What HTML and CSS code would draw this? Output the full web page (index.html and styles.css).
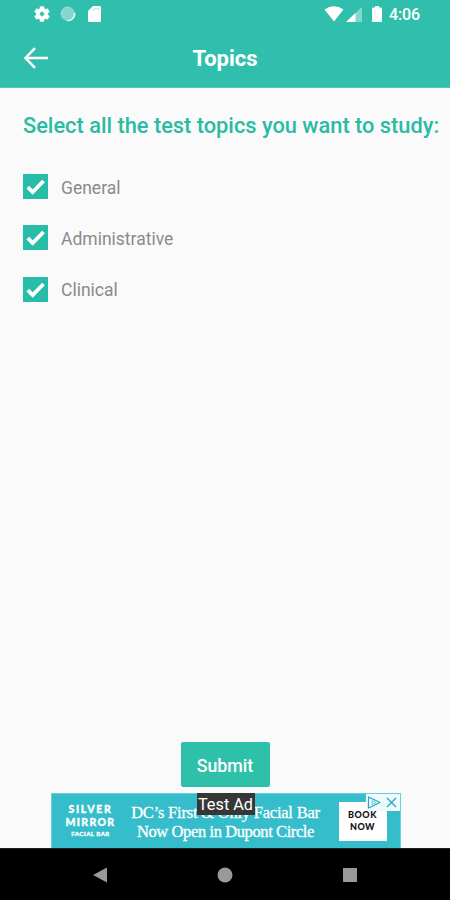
FILE: index.html
```html
<!DOCTYPE html>
<html lang="en">
<head>
<meta charset="utf-8">
<title>Topics</title>
<link rel="stylesheet" href="styles.css">
</head>
<body>
<div class="screen">
  <header class="header">
    <div class="status">
      <svg class="gear" width="18" height="18" viewBox="0 0 24 24"><path fill="#fff" stroke="#fff" stroke-width=".7" fill-rule="evenodd" d="M19.43 12.98c.04-.32.07-.64.07-.98s-.03-.66-.07-.98l2.11-1.65c.19-.15.24-.42.12-.64l-2-3.46c-.12-.22-.39-.3-.61-.22l-2.49 1c-.52-.4-1.08-.73-1.69-.98l-.38-2.65A.49.49 0 0 0 14 2h-4c-.25 0-.46.18-.49.42l-.38 2.65c-.61.25-1.17.59-1.69.98l-2.49-1c-.23-.09-.49 0-.61.22l-2 3.46c-.13.22-.07.49.12.64l2.11 1.65c-.04.32-.07.65-.07.98s.03.66.07.98l-2.11 1.65c-.19.15-.24.42-.12.64l2 3.46c.12.22.39.3.61.22l2.49-1c.52.4 1.08.73 1.69.98l.38 2.65c.03.24.24.42.49.42h4c.25 0 .46-.18.49-.42l.38-2.65c.61-.25 1.17-.59 1.69-.98l2.49 1c.23.09.49 0 .61-.22l2-3.46c.12-.22.07-.49-.12-.64zM12 15.2a3.2 3.2 0 1 1 0-6.4 3.2 3.2 0 0 1 0 6.4z"/></svg>
      <svg class="sync" width="16" height="16" viewBox="0 0 16 16"><circle cx="8" cy="8" r="7.2" fill="#83d8cb"/><path d="M14.700 7A7 7 0 0 1 7.500 14.700" fill="none" stroke="#e4f8f4" stroke-width="1.600"/><path d="M1.200 9A7 7 0 0 1 8 1" fill="none" stroke="#a4e2d9"/></svg>
      <svg class="card" width="13" height="16" viewBox="0 0 13 16"><path fill="#fff" d="M5 0h6.500Q13 0 13 1.500V14.500Q13 16 11.500 16h-10Q0 16 0 14.500V5z"/><path d="M5.400 2.500v2M7.900 2v2M10.300 2v2" stroke="#a5e0d7" stroke-width="1.200"/></svg>
      <span class="spacer"></span>
      <svg width="20" height="16" viewBox="0 0 20 16"><path fill="#fff" d="M.5 3.500Q10-3 19.500 3.500L10 15.500z"/></svg>
      <svg class="signal" width="16" height="15" viewBox="0 0 16 15"><path fill="#83d8cb" d="M16 0v15H0z"/><path fill="#fff" d="M9.500 6.100V15H0z"/></svg>
      <svg class="battery" width="10" height="16" viewBox="0 0 10 16"><path fill="#fff" d="M3 0h4v1.600h2Q10 1.600 10 2.600V15q0 1-1 1H1q-1 0-1-1V2.600q0-1 1-1h2z"/></svg>
      <span class="time">4:06</span>
    </div>
    <div class="bar">
      <svg class="back" width="24" height="22" viewBox="0 0 24 22"><path d="M24 11H2M11 1.200L1.500 11l9.500 9.800" fill="none" stroke="#fff" stroke-width="2.500"/></svg>
      <h1>Topics</h1>
    </div>
  </header>
  <main class="content">
    <h2>Select all the test topics you want to study:</h2>
    <ul class="topics">
      <li><span class="box"><svg width="25" height="25" viewBox="0 0 25 25"><path d="M4.800 13.200l4.900 4.900L20.500 7" fill="none" stroke="#fff" stroke-width="3.800"/></svg></span><span class="label">General</span></li>
      <li><span class="box"><svg width="25" height="25" viewBox="0 0 25 25"><path d="M4.800 13.200l4.900 4.900L20.500 7" fill="none" stroke="#fff" stroke-width="3.800"/></svg></span><span class="label">Administrative</span></li>
      <li><span class="box"><svg width="25" height="25" viewBox="0 0 25 25"><path d="M4.800 13.200l4.900 4.900L20.500 7" fill="none" stroke="#fff" stroke-width="3.800"/></svg></span><span class="label">Clinical</span></li>
    </ul>
  </main>
  <button class="submit">Submit</button>
  <div class="ad">
    <div class="brand"><span>SILVER</span><span class="mirror">MIRROR</span><small>FACIAL BAR</small></div>
    <div class="copy"><span class="line-one">DC’s First &amp; Only Facial Bar</span><span class="line-two">Now Open in Dupont Circle</span></div>
    <div class="book"><span>BOOK</span><span>NOW</span></div>
    <span class="test">Test Ad</span>
    <span class="choices"><svg width="34" height="17" viewBox="0 0 34 17"><path d="M2.500 3v11L14 8.500z" fill="none" stroke="#2ba5c9" stroke-width="1.200" stroke-linejoin="round"/><path d="M6 6.500v4l4-2z" fill="none" stroke="#7cc8df"/><path d="M21 4l9 9M30 4l-9 9" stroke="#2ba5c9" stroke-width="1.400"/></svg></span>
  </div>
  <nav class="nav">
    <svg width="14" height="16" viewBox="0 0 14 16"><path fill="#999" d="M14 .5v15L0 8z"/></svg>
    <svg width="16" height="16" viewBox="0 0 16 16"><circle cx="8" cy="8" r="7.500" fill="#999"/></svg>
    <svg width="14" height="14" viewBox="0 0 14 14"><path fill="#999" d="M0 0h14v14H0z"/></svg>
  </nav>
</div>
</body>
</html>
```
FILE: styles.css
```css
* { box-sizing: border-box; }
body { margin: 0; font-family: Roboto, sans-serif; background: #fafafa; }
svg { display: block; flex: none; }
.screen { width: 450px; height: 900px; display: flex; flex-direction: column; overflow: hidden; background: #fafafa; }
.header { height: 88px; flex: none; background: #31bfad; border-bottom: 1px solid #56c8b9; color: #fff; }
.status { height: 28px; display: flex; align-items: center; padding: 0 30px 0 33px; }
.sync { margin-left: 9px; }
.card { margin-left: 12px; }
.spacer { flex: 1; }
.signal { margin-left: 2px; }
.battery { margin: 0 7px 0 10px; }
.time { padding-top: 2px; font-size: 16px; font-weight: 500; line-height: 26px; width: 31px; letter-spacing: -0.1px; white-space: nowrap; }
.bar { height: 59px; display: grid; grid-template-columns: 1fr auto 1fr; align-items: center; padding: 0 24px; }
h1 { margin: 2px 0 0; font-size: 22px; line-height: 28px; font-weight: 700; }
.content { flex: 1; padding: 23px 0 0 23px; }
h2 { margin: 0; font-size: 21.8px; line-height: 30px; font-weight: 500; color: #2bbaa3; white-space: nowrap; }
.topics { list-style: none; margin: 33px 0 0; padding: 0; display: flex; flex-direction: column; gap: 26.4px; }
.topics li { display: flex; align-items: center; gap: 13px; height: 25px; font-size: 17.5px; color: #8a8a8a; }
.label { padding-top: 2px; }
.box { width: 25px; height: 25px; background: #27bda9; }
.submit { width: 89px; height: 45px; flex: none; align-self: center; margin: 0 0 6px; padding: 2px 0 0; border: 0; border-radius: 2px; background: #2fc0a9; color: #fff; font: 500 17.8px Roboto, sans-serif; }
.ad { position: relative; width: 350px; height: 55px; flex: none; align-self: center; margin-left: 1px; display: flex; background: #35bdcb; border: 1px solid #6bcfda; border-bottom: 0; color: #fff; }
.brand { width: 78px; padding-top: 9px; display: flex; flex-direction: column; align-items: center; font: 900 10.5px/13px Lato, sans-serif; letter-spacing: 1.7px; -webkit-text-stroke: 0.3px #fff; }
.mirror { letter-spacing: 1.3px; }
.brand small { font-size: 6px; line-height: 10px; letter-spacing: 0.5px; }
.copy { width: 192px; padding-top: 9px; display: flex; flex-direction: column; align-items: center; font: 16.5px/19px "Liberation Serif", serif; white-space: nowrap; -webkit-text-stroke: 0.3px #fff; }
.line-one { letter-spacing: -0.22px; }
.line-two { letter-spacing: -0.4px; }
.book { width: 48px; height: 39px; margin: 8px 0 0 17px; padding-top: 7px; display: flex; flex-direction: column; align-items: center; background: #fff; color: #111; font: 900 9px/12px Lato, sans-serif; letter-spacing: 0.5px; }
.test { position: absolute; left: 145px; top: -1px; width: 58px; height: 22px; background: #373737; font-size: 16.3px; line-height: 24px; text-align: center; white-space: nowrap; }
.choices { position: absolute; right: 0; top: 0; width: 34px; height: 17px; background: #eefafd; }
.nav { height: 52px; flex: none; background: #000; display: flex; justify-content: space-between; align-items: center; padding: 0 93px; border-top: 1px solid #222; }
```
